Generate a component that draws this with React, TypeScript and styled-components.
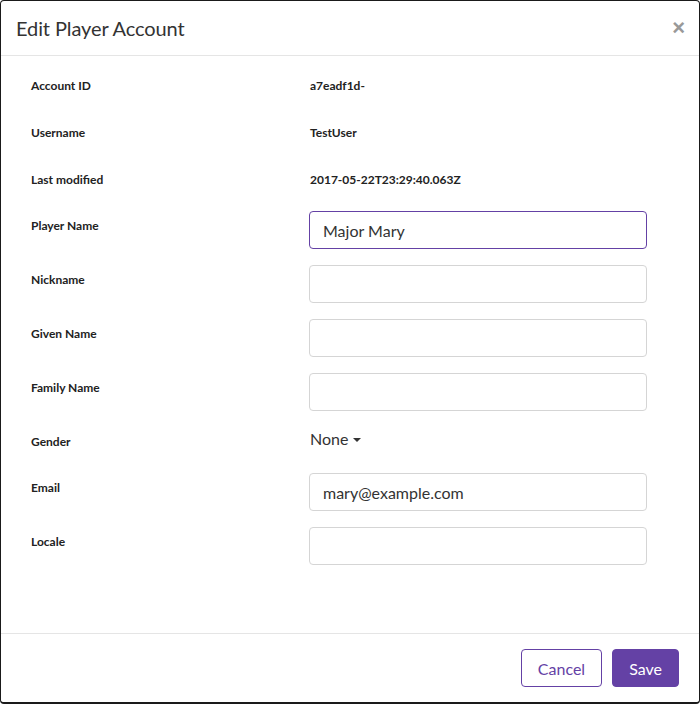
import React from "react";
import styled, { createGlobalStyle } from "styled-components";

const Global = createGlobalStyle`
  html, body { margin: 0; padding: 0; background: #fff; }
  body { font-family: Lato, "Open Sans", Arial, sans-serif; color: #333; }
  * { box-sizing: border-box; }
`;

const Modal = styled.div`
  width: 700px;
  height: 704px;
  border: 1px solid #1a1a1a;
  border-bottom-width: 2px;
  border-radius: 4px;
  display: flex;
  flex-direction: column;
  background: #fff;
`;

const Header = styled.div`
  display: flex;
  align-items: center;
  justify-content: space-between;
  height: 55px;
  padding: 0 14px 0 15px;
  border-bottom: 1px solid #e5e5e5;
`;

const Title = styled.h4`
  margin: 0;
  font-size: 20px;
  font-weight: 400;
  color: #333;
  line-height: 25px;
  letter-spacing: -0.1px;
`;

const Close = styled.button`
  border: none;
  background: none;
  padding: 0;
  font-size: 22px;
  font-weight: 700;
  color: #999;
  line-height: 1;
  cursor: pointer;
  font-family: Arial, sans-serif;
`;

const Body = styled.div`
  flex: 1;
  padding: 20px 30px 0 30px;
  display: flex;
  flex-direction: column;
  gap: 10px;
`;

const Group = styled.div`
  display: flex;
  flex-direction: column;
  gap: 16px;
`;

const Row = styled.div<{ $h?: number }>`
  display: grid;
  grid-template-columns: 278px 338px;
  align-items: start;
  min-height: ${(p) => p.$h ?? 31}px;
`;

const Label = styled.label<{ $pad?: number }>`
  font-size: 12px;
  font-weight: 700;
  color: #222;
  line-height: 20px;
  padding-top: ${(p) => p.$pad ?? 0}px;
`;

const Value = styled.div`
  font-size: 12px;
  font-weight: 700;
  color: #222;
  line-height: 20px;
  padding-left: 1px;
`;

const Input = styled.input`
  width: 338px;
  height: 38px;
  border: 1px solid #d5d5d5;
  border-radius: 4px;
  padding: 0 13px;
  font-family: Lato, "Open Sans", Arial, sans-serif;
  font-size: 16px;
  color: #333;
  outline: none;
  &:focus {
    border-color: #6441a5;
  }
`;

const Dropdown = styled.div`
  display: flex;
  align-items: center;
  gap: 5px;
  height: 24px;
  font-size: 16px;
  line-height: 24px;
  color: #333;
  padding-left: 1px;
`;

const Caret = styled.span`
  width: 0;
  height: 0;
  border-left: 4px solid transparent;
  border-right: 4px solid transparent;
  border-top: 4px solid #333;
  margin-top: 2px;
`;

const Footer = styled.div`
  display: flex;
  justify-content: flex-end;
  gap: 10px;
  padding: 15px 20px 15px;
  border-top: 1px solid #e5e5e5;
`;

const Button = styled.button<{ $primary?: boolean }>`
  height: 38px;
  padding: 0 16px;
  border-radius: 4px;
  border: 1px solid #6441a5;
  background: ${(p) => (p.$primary ? "#6441a5" : "#fff")};
  color: ${(p) => (p.$primary ? "#fff" : "#6441a5")};
  font-family: Lato, "Open Sans", Arial, sans-serif;
  font-size: 16px;
  cursor: pointer;
`;

const readOnly = [
  ["Account ID", "a7eadf1d-"],
  ["Username", "TestUser"],
  ["Last modified", "2017-05-22T23:29:40.063Z"],
];

export default function App() {
  return (
    <>
      <Global />
      <Modal>
        <Header>
          <Title>Edit Player Account</Title>
          <Close aria-label="Close">×</Close>
        </Header>
        <Body>
          <Group>
            {readOnly.map(([l, v]) => (
              <Row key={l}>
                <Label>{l}</Label>
                <Value>{v}</Value>
              </Row>
            ))}
          </Group>
          <Group>
            <Row>
              <Label $pad={5}>Player Name</Label>
              <Input defaultValue="Major Mary" autoFocus />
            </Row>
            <Row>
              <Label $pad={5}>Nickname</Label>
              <Input />
            </Row>
            <Row>
              <Label $pad={5}>Given Name</Label>
              <Input />
            </Row>
            <Row>
              <Label $pad={5}>Family Name</Label>
              <Input />
            </Row>
            <Row $h={30}>
              <Label $pad={5}>Gender</Label>
              <Dropdown>
                None <Caret />
              </Dropdown>
            </Row>
            <Row>
              <Label $pad={5}>Email</Label>
              <Input defaultValue="mary@example.com" />
            </Row>
            <Row>
              <Label $pad={5}>Locale</Label>
              <Input />
            </Row>
          </Group>
        </Body>
        <Footer>
          <Button>Cancel</Button>
          <Button $primary>Save</Button>
        </Footer>
      </Modal>
    </>
  );
}
